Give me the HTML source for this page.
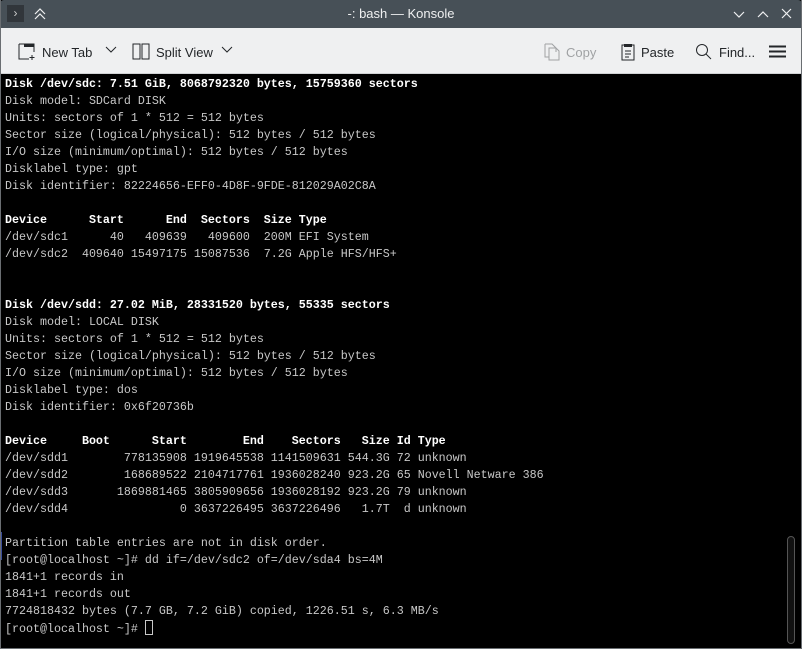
<!DOCTYPE html>
<html><head><meta charset="utf-8"><style>
*{margin:0;padding:0;box-sizing:border-box}
body{width:802px;height:649px;overflow:hidden;background:#000;font-family:"Liberation Sans",sans-serif;position:relative}
#title{position:absolute;left:0;top:0;width:802px;height:28px;background:#475057;color:#eff0f1;font-size:13px;border-radius:4px 4px 0 0}
#title .t{position:absolute;left:0;right:0;top:6px;text-align:center}
#tb{position:absolute;left:0;top:28px;width:802px;height:46px;background:#eff0f1;border-bottom:1px solid #d0d2d4;font-size:13px;color:#232629}
.it{position:absolute;top:15px;display:flex;align-items:center;gap:6px}
pre{position:absolute;left:5px;top:76px;font-family:"Liberation Mono",monospace;font-size:11.67px;line-height:17px;color:#c8c8c8}
b{color:#fff;font-weight:bold}
.cur{display:inline-block;width:8px;height:15px;border:1px solid #c8c8c8;vertical-align:-3px}
#sb{position:absolute;left:787px;top:536px;width:8px;height:108px;border:1px solid #555;border-radius:4px;background:#111}
#edge{position:absolute;left:0;top:532px;width:2px;height:28px;background:#3a4d9a}
#frame{position:absolute;left:0;top:0;width:802px;height:649px;border:1px solid #6a6e72;border-top:none;pointer-events:none}
</style></head><body>
<div id="title">
<div style="position:absolute;left:7px;top:5px;width:17px;height:17px;background:#31363b;color:#ccc;font-size:12px;line-height:17px;text-align:center">›</div>
<svg style="position:absolute;left:33px;top:7px" width="14" height="14"><path d="M2 7l5-5 5 5M2 12l5-5 5 5" stroke="#eff0f1" fill="none" stroke-width="1.2"/></svg>
<div class="t">-: bash — Konsole</div>
<svg style="position:absolute;left:733px;top:8px" width="60" height="12"><path d="M1 4l5 5 5-5M25 9l5-5 5 5M49 1l9 9M58 1l-9 9" stroke="#eff0f1" fill="none" stroke-width="1.2"/></svg>
</div>
<div id="tb">
<div class="it" style="left:18px"><svg width="18" height="18"><path d="M1 1h15v8M1 1v15h10M14 12v5M11.5 14.5h5" stroke="#232629" fill="none"/><rect x="6" y="1" width="10" height="3" fill="#232629"/></svg>New Tab</div>
<svg style="position:absolute;left:105px;top:18px" width="12" height="8"><path d="M1 1l5 5 5-5" stroke="#232629" fill="none"/></svg>
<div class="it" style="left:132px"><svg width="18" height="18"><rect x="1" y="1" width="7" height="15" stroke="#232629" fill="none"/><rect x="10" y="1" width="7" height="15" stroke="#232629" fill="none"/></svg>Split View</div>
<svg style="position:absolute;left:221px;top:18px" width="12" height="8"><path d="M1 1l5 5 5-5" stroke="#232629" fill="none"/></svg>
<div class="it" style="left:544px;color:#a0a2a4"><svg width="16" height="18"><path d="M1 1h7l4 4v4M1 1v13h4M5 5h7l3 3v9H5z" stroke="#a0a2a4" fill="none"/></svg>Copy</div>
<div class="it" style="left:621px"><svg width="14" height="18"><rect x="1" y="2" width="12" height="15" stroke="#232629" fill="none"/><rect x="3" y="1" width="8" height="3" fill="#232629"/><path d="M4 8h6M4 11h6M4 14h4" stroke="#232629"/></svg>Paste</div>
<div class="it" style="left:695px"><svg width="18" height="18"><circle cx="7" cy="7" r="5.5" stroke="#232629" fill="none"/><path d="M11 11l5 5" stroke="#232629"/></svg>Find...</div>
<svg style="position:absolute;left:769px;top:17px" width="18" height="14"><path d="M0 1.5h17M0 6.5h17M0 11.5h17" stroke="#232629" stroke-width="2"/></svg>
</div>
<pre><b>Disk /dev/sdc: 7.51 GiB, 8068792320 bytes, 15759360 sectors</b>
Disk model: SDCard DISK
Units: sectors of 1 * 512 = 512 bytes
Sector size (logical/physical): 512 bytes / 512 bytes
I/O size (minimum/optimal): 512 bytes / 512 bytes
Disklabel type: gpt
Disk identifier: 82224656-EFF0-4D8F-9FDE-812029A02C8A

<b>Device      Start      End  Sectors  Size Type</b>
/dev/sdc1      40   409639   409600  200M EFI System
/dev/sdc2  409640 15497175 15087536  7.2G Apple HFS/HFS+


<b>Disk /dev/sdd: 27.02 MiB, 28331520 bytes, 55335 sectors</b>
Disk model: LOCAL DISK
Units: sectors of 1 * 512 = 512 bytes
Sector size (logical/physical): 512 bytes / 512 bytes
I/O size (minimum/optimal): 512 bytes / 512 bytes
Disklabel type: dos
Disk identifier: 0x6f20736b

<b>Device     Boot      Start        End    Sectors   Size Id Type</b>
/dev/sdd1        778135908 1919645538 1141509631 544.3G 72 unknown
/dev/sdd2        168689522 2104717761 1936028240 923.2G 65 Novell Netware 386
/dev/sdd3       1869881465 3805909656 1936028192 923.2G 79 unknown
/dev/sdd4                0 3637226495 3637226496   1.7T  d unknown

Partition table entries are not in disk order.
[root@localhost ~]# dd if=/dev/sdc2 of=/dev/sda4 bs=4M
1841+1 records in
1841+1 records out
7724818432 bytes (7.7 GB, 7.2 GiB) copied, 1226.51 s, 6.3 MB/s
[root@localhost ~]# <span class="cur"></span></pre>
<div id="edge"></div>
<div id="sb"></div>
<div id="frame"></div>
</body></html>
